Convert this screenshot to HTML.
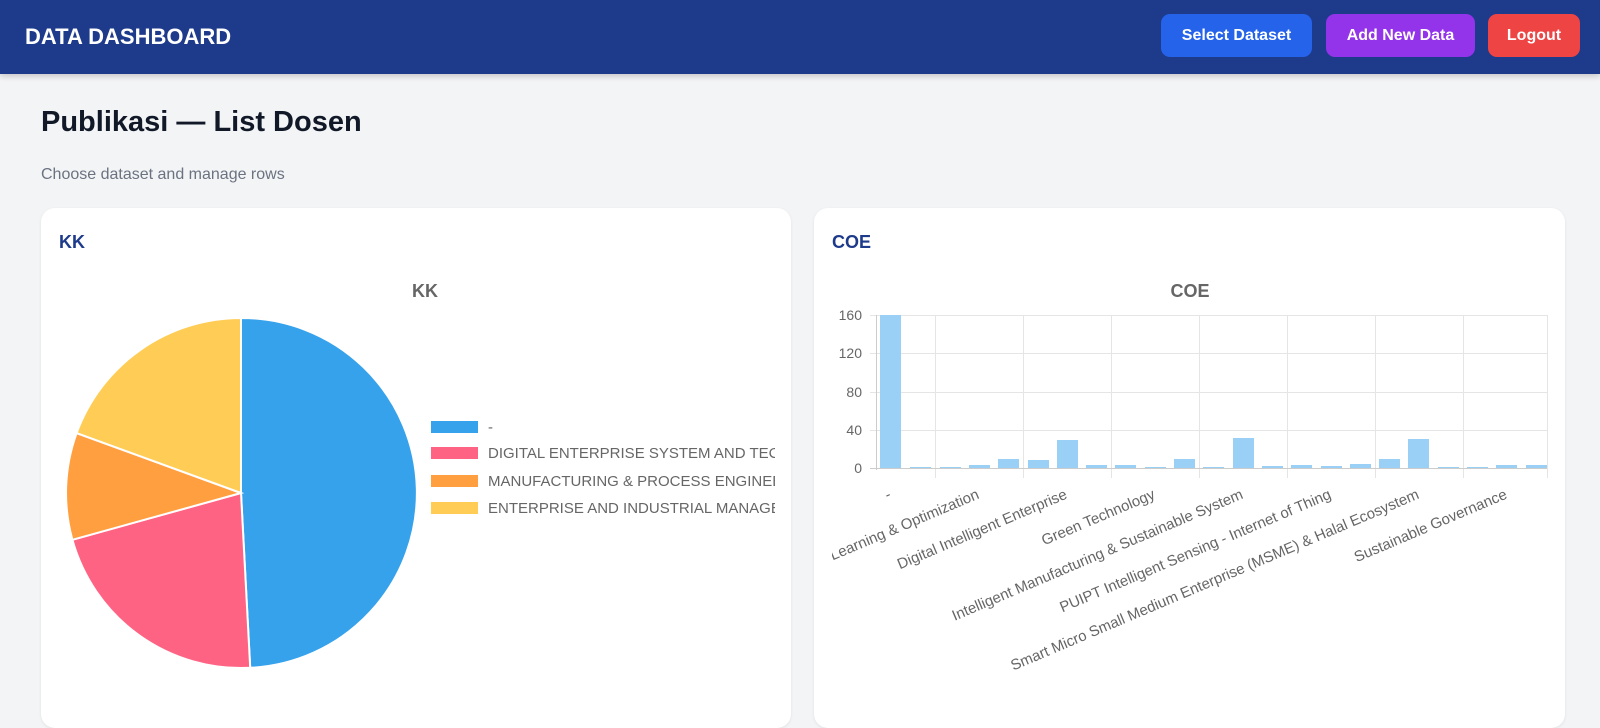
<!DOCTYPE html>
<html><head><meta charset="utf-8"><style>
*{box-sizing:border-box;margin:0;padding:0}
body{width:1600px;height:694px;overflow:hidden;background:#f3f4f6;font-family:"Liberation Sans",sans-serif;position:relative}
.nav{position:absolute;left:0;top:0;width:1600px;height:74px;background:#1e3a8a;box-shadow:0 2px 6px rgba(0,0,0,.2)}
.brand{position:absolute;left:25px;top:24px;color:#fff;font-weight:bold;font-size:22px}
.btn{position:absolute;top:14px;height:43px;border-radius:9px;color:#fff;font-weight:bold;font-size:16px;line-height:43px;text-align:center}
h1{position:absolute;left:41px;top:106px;font-size:29px;color:#111827;font-weight:bold}
.sub{position:absolute;left:41px;top:166px;font-size:16px;color:#6b7280}
.card{position:absolute;top:208px;height:520px;background:#fff;border-radius:14px;box-shadow:0 1px 3px rgba(0,0,0,.08)}
.ct{position:absolute;left:18px;top:24px;font-size:18px;font-weight:bold;color:#1e3a8a}
svg{position:absolute;left:0;top:0}
</style></head><body>
<div class="nav"><div class="brand">DATA DASHBOARD</div>
<div class="btn" style="left:1161px;width:151px;background:#2563eb">Select Dataset</div>
<div class="btn" style="left:1326px;width:149px;background:#9333ea">Add New Data</div>
<div class="btn" style="left:1488px;width:92px;background:#ef4444">Logout</div></div>
<h1>Publikasi — List Dosen</h1>
<div class="sub">Choose dataset and manage rows</div>
<div class="card" style="left:41px;width:750px"><div class="ct">KK</div></div>
<div class="card" style="left:814px;width:751px"><div class="ct">COE</div></div>
<svg width="1600" height="694" font-family="Liberation Sans, sans-serif">
<defs><clipPath id="lc"><rect x="420" y="400" width="355" height="130"/></clipPath></defs>
<text x="425" y="297" text-anchor="middle" font-size="18" font-weight="bold" fill="#666">KK</text>
<g stroke="#fff" stroke-width="2">
<path d="M241 493 L241 318 A175 175 0 0 1 250.2 667.8 Z" fill="#36a2eb"/>
<path d="M241 493 L250.2 667.8 A175 175 0 0 1 72.4 539.8 Z" fill="#ff6384"/>
<path d="M241 493 L72.4 539.8 A175 175 0 0 1 76.6 433.1 Z" fill="#ff9f40"/>
<path d="M241 493 L76.6 433.1 A175 175 0 0 1 241 318 Z" fill="#ffcd56"/>
</g>
<g clip-path="url(#lc)" font-size="15" fill="#666">
<rect x="431" y="421" width="47" height="12" fill="#36a2eb"/><text x="488" y="432">-</text>
<rect x="431" y="447" width="47" height="12" fill="#ff6384"/><text x="488" y="458">DIGITAL ENTERPRISE SYSTEM AND TECHNOLOGY</text>
<rect x="431" y="475" width="47" height="12" fill="#ff9f40"/><text x="488" y="486">MANUFACTURING &amp; PROCESS ENGINEERING</text>
<rect x="431" y="502" width="47" height="12" fill="#ffcd56"/><text x="488" y="513">ENTERPRISE AND INDUSTRIAL MANAGEMENT</text>
</g>
<text x="1190" y="297" text-anchor="middle" font-size="18" font-weight="bold" fill="#666">COE</text>
<g stroke="#e5e5e5" stroke-width="1">
<line x1="870" y1="315.5" x2="1547" y2="315.5"/><line x1="870" y1="353.5" x2="1547" y2="353.5"/>
<line x1="870" y1="392.5" x2="1547" y2="392.5"/><line x1="870" y1="430.5" x2="1547" y2="430.5"/>
<line x1="935.5" y1="315" x2="935.5" y2="478"/><line x1="1023.5" y1="315" x2="1023.5" y2="478"/>
<line x1="1111.5" y1="315" x2="1111.5" y2="478"/><line x1="1199.5" y1="315" x2="1199.5" y2="478"/>
<line x1="1287.5" y1="315" x2="1287.5" y2="478"/><line x1="1375.5" y1="315" x2="1375.5" y2="478"/>
<line x1="1463.5" y1="315" x2="1463.5" y2="478"/><line x1="1547.5" y1="315" x2="1547.5" y2="478"/>
</g>
<line x1="876.5" y1="315" x2="876.5" y2="470" stroke="#ccc"/>
<line x1="870" y1="468.5" x2="1547" y2="468.5" stroke="#ccc"/>
<g font-size="14" fill="#666" text-anchor="end">
<text x="862" y="320">160</text><text x="862" y="358">120</text><text x="862" y="397">80</text><text x="862" y="435">40</text><text x="862" y="473">0</text>
</g>
<g fill="#9ad0f5">
<rect x="880" y="315" width="21" height="153"/>
<rect x="910" y="467" width="21" height="1"/>
<rect x="940" y="467" width="21" height="1"/>
<rect x="969" y="465" width="21" height="3"/>
<rect x="998" y="459" width="21" height="9"/>
<rect x="1028" y="460" width="21" height="8"/>
<rect x="1057" y="440" width="21" height="28"/>
<rect x="1086" y="465" width="21" height="3"/>
<rect x="1115" y="465" width="21" height="3"/>
<rect x="1145" y="467" width="21" height="1"/>
<rect x="1174" y="459" width="21" height="9"/>
<rect x="1203" y="467" width="21" height="1"/>
<rect x="1233" y="438" width="21" height="30"/>
<rect x="1262" y="466" width="21" height="2"/>
<rect x="1291" y="465" width="21" height="3"/>
<rect x="1321" y="466" width="21" height="2"/>
<rect x="1350" y="464" width="21" height="4"/>
<rect x="1379" y="459" width="21" height="9"/>
<rect x="1408" y="439" width="21" height="29"/>
<rect x="1438" y="467" width="21" height="1"/>
<rect x="1467" y="467" width="21" height="1"/>
<rect x="1496" y="465" width="21" height="3"/>
<rect x="1526" y="465" width="21" height="3"/>
</g>
<defs><clipPath id="bc"><rect x="832" y="470" width="740" height="230"/></clipPath></defs>
<g font-size="15" fill="#666" text-anchor="end" clip-path="url(#bc)">
<text transform="translate(892,498) rotate(-23)">-</text>
<text transform="translate(980,498) rotate(-23)">Machine Learning &amp; Optimization</text>
<text transform="translate(1068,498) rotate(-23)">Digital Intelligent Enterprise</text>
<text transform="translate(1156,498) rotate(-23)">Green Technology</text>
<text transform="translate(1244,498) rotate(-23)">Intelligent Manufacturing &amp; Sustainable System</text>
<text transform="translate(1332,498) rotate(-23)">PUIPT Intelligent Sensing - Internet of Thing</text>
<text transform="translate(1420,498) rotate(-23)">Smart Micro Small Medium Enterprise (MSME) &amp; Halal Ecosystem</text>
<text transform="translate(1508,498) rotate(-23)">Sustainable Governance</text>
</g>
</svg>
</body></html>
